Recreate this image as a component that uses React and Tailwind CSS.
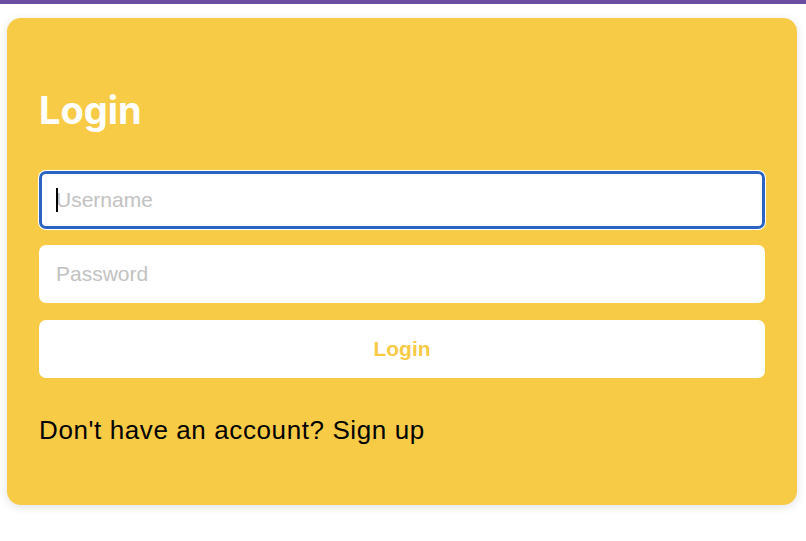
import React from 'react';

export default function App() {
  return (
    <div className="w-[806px] h-[541px] bg-white overflow-hidden">
      <div className="h-[4px] bg-[#6a4c9e]" />
      <div className="px-[7px] pt-[14px]">
        <div className="w-[790px] bg-[#f7cb46] rounded-[14px] shadow-[0_2px_10px_rgba(0,0,0,0.12)] px-[32px] pt-[71px] pb-[60px]">
          <h1 className="text-[38px] leading-[42px] font-bold text-white font-['Inter',sans-serif] mb-[40px]">Login</h1>

          <div className="flex flex-col">
            {/* focused field */}
            <div className="relative">
              <input
                type="text"
                placeholder="Username"
                className="w-full h-[58px] rounded-[7px] bg-white border-[3px] border-[#2c62c2] shadow-[0_0_0_1px_#ffffff] px-[14px] text-[21px] font-['Liberation_Sans',sans-serif] placeholder:text-[#c2c2c2] outline-none"
              />
              <span className="absolute left-[17px] top-[17px] w-[1.5px] h-[24px] bg-black" />
            </div>
            <input
              type="password"
              placeholder="Password"
              className="mt-[16px] w-full h-[58px] rounded-[7px] bg-white px-[17px] text-[21px] font-['Liberation_Sans',sans-serif] placeholder:text-[#c2c2c2] outline-none"
            />
            <button className="mt-[17px] w-full h-[58px] rounded-[7px] bg-white text-[#f7cb46] text-[21px] font-bold font-['Liberation_Sans',sans-serif]">
              Login
            </button>
          </div>

          <p className="mt-[37px] text-[26px] leading-[30px] tracking-[0.6px] text-black font-['Liberation_Sans',sans-serif]">
            Don't have an account? Sign up
          </p>
        </div>
      </div>
    </div>
  );
}
